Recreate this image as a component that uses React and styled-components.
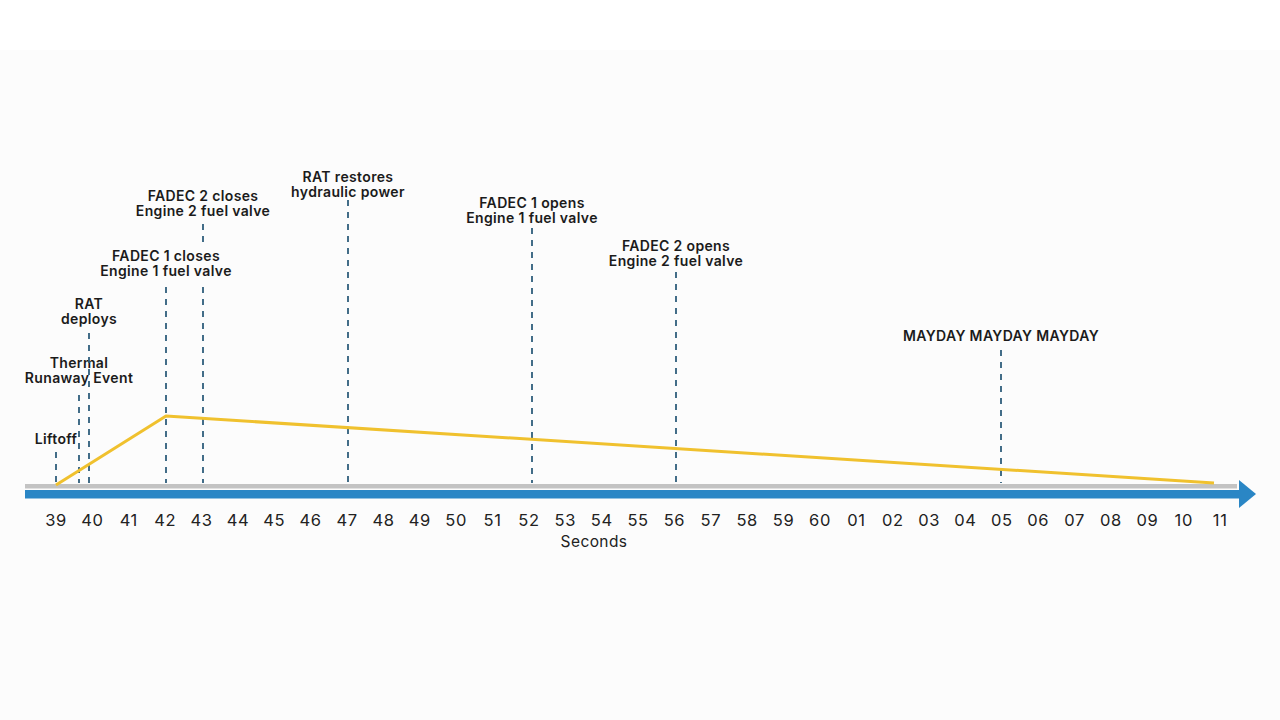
import React from 'react';
import styled, { createGlobalStyle } from 'styled-components';

const GlobalStyle = createGlobalStyle`
  html, body {
    margin: 0;
    padding: 0;
  }
  body {
    background: #fcfcfc;
    font-family: Inter, "Open Sans", sans-serif;
  }
`;

const Page = styled.main`
  width: 1280px;
  height: 720px;
  overflow: hidden;
  background: linear-gradient(#ffffff 0 50px, #fcfcfc 50px 100%);
`;

const Chart = styled.svg`
  display: block;
  width: 1280px;
  height: 720px;
`;

const EventLabel = styled.text`
  font-family: Inter, "Open Sans", sans-serif;
  font-size: 14px;
  font-weight: 600;
  letter-spacing: 0.35px;
  fill: #1b1b1b;
  text-anchor: middle;
`;

const TickLabel = styled.text`
  font-family: Inter, "Open Sans", sans-serif;
  font-size: 16.5px;
  font-weight: 400;
  letter-spacing: 0.6px;
  fill: #222;
  text-anchor: middle;
`;

const AxisTitle = styled(TickLabel)`
  font-size: 15.5px;
  letter-spacing: 0.4px;
`;

const Marker = styled.line`
  stroke: #2f5e7c;
  stroke-width: 1.8;
  stroke-dasharray: 6 6;
`;

const AXIS_Y = 483;
const TICK_START = 56;
const TICK_STEP = 36.38;

const ticks = ['39', '40', '41', '42', '43', '44', '45', '46', '47', '48', '49', '50', '51', '52', '53', '54',
  '55', '56', '57', '58', '59', '60', '01', '02', '03', '04', '05', '06', '07', '08', '09', '10', '11'];

const events = [
  { x: 56, top: 452, labelY: 444, lines: ['Liftoff'] },
  { x: 79, top: 395, labelY: 368, lines: ['Thermal', 'Runaway Event'] },
  { x: 89, top: 333, labelY: 309, lines: ['RAT', 'deploys'] },
  { x: 166, top: 287, labelY: 261, lines: ['FADEC 1 closes', 'Engine 1 fuel valve'] },
  { x: 203, top: 287, labelY: 201, extra: [224, 242], lines: ['FADEC 2 closes', 'Engine 2 fuel valve'] },
  { x: 348, top: 200, labelY: 182, lines: ['RAT restores', 'hydraulic power'] },
  { x: 532, top: 228, labelY: 208, lines: ['FADEC 1 opens', 'Engine 1 fuel valve'] },
  { x: 676, top: 272, labelY: 251, lines: ['FADEC 2 opens', 'Engine 2 fuel valve'] },
  { x: 1001, top: 350, labelY: 341, lines: ['MAYDAY MAYDAY MAYDAY'] },
];

function EventMarker({ event }) {
  const { x, top, labelY, extra, lines } = event;
  return (
    <g>
      {extra && <Marker x1={x} x2={x} y1={extra[0]} y2={extra[1]} />}
      <Marker x1={x} x2={x} y1={top} y2={AXIS_Y} />
      <EventLabel x={x} y={labelY}>
        {lines.map((line, i) => (
          <tspan key={i} x={x} dy={i === 0 ? 0 : 15}>{line}</tspan>
        ))}
      </EventLabel>
    </g>
  );
}

export default function App() {
  return (
    <Page>
      <GlobalStyle />
      <Chart viewBox="0 0 1280 720">
        {/* axis rails */}
        <rect x="25" y="484" width="1212" height="4.5" fill="#c3c3c3" />
        <rect x="25" y="490" width="1216" height="8.5" fill="#2a86c5" />
        <polygon points="1239,480 1256,494 1239,508" fill="#2a86c5" />

        {events.map((e, i) => <EventMarker key={i} event={e} />)}

        {/* altitude profile */}
        <polyline
          points="56,485 166,416 1214,483"
          fill="none"
          stroke="#f0c12e"
          strokeWidth="3"
          strokeLinejoin="round"
        />

        {ticks.map((t, i) => (
          <TickLabel key={t} x={TICK_START + i * TICK_STEP} y={526}>{t}</TickLabel>
        ))}
        <AxisTitle x={594} y={547}>Seconds</AxisTitle>
      </Chart>
    </Page>
  );
}
